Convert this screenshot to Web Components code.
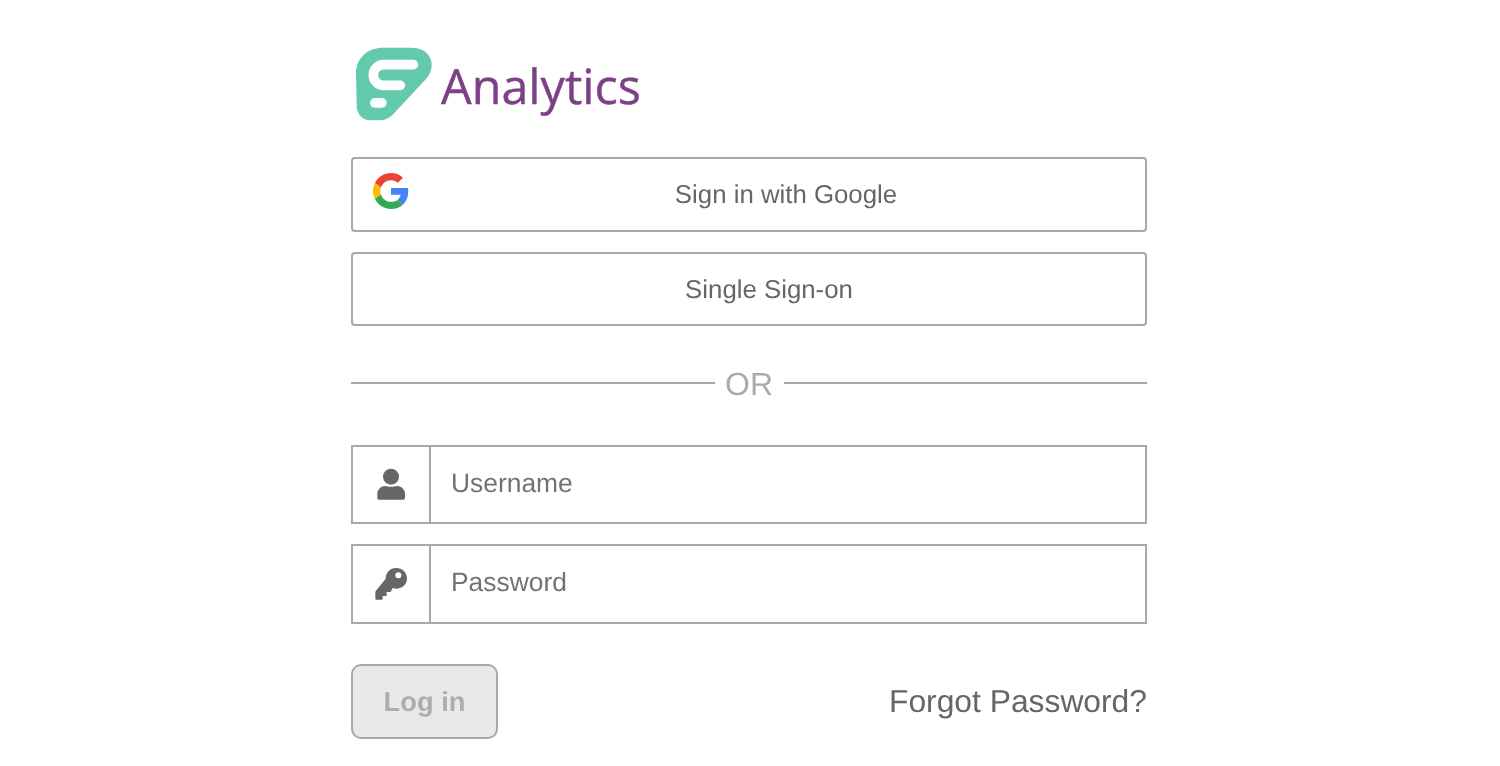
<!DOCTYPE html>
<html>
<head>
<meta charset="utf-8">
<title>Analytics</title>
<style>
    html, body { margin: 0; background: #fff; }
    body { font-family: "Liberation Sans", Arial, sans-serif; color: #666; text-rendering: geometricPrecision; }
</style>
</head>
<body>
<login-page>
    <brand-logo slot="logo">Analytics</brand-logo>
    <sign-button slot="sso" icon="google">Sign in with Google</sign-button>
    <sign-button slot="sso">Single Sign-on</sign-button>
    <or-divider slot="divider">OR</or-divider>
    <icon-field slot="fields" icon="user">Username</icon-field>
    <icon-field slot="fields" icon="key">Password</icon-field>
    <login-actions slot="actions" link="Forgot Password?">Log in</login-actions>
</login-page>

<script>
class LoginPage extends HTMLElement {
    constructor() {
        super()
        this.attachShadow({mode: 'open'})
        this.shadowRoot.innerHTML = `
            <style>
                :host { display: block; padding: 47px 0 0 351px; will-change: transform; }
                .box { width: 796px; }
                .sso { display: flex; flex-direction: column; gap: 20px; margin-top: 36px; }
                .fields { display: flex; flex-direction: column; gap: 20px; margin-top: 42px; }
                .divider { display: block; margin-top: 40.8px; }
                .actions { display: block; margin-top: 40.2px; }
            </style>
            <div class="box">
                <slot name="logo"></slot>
                <div class="sso"><slot name="sso"></slot></div>
                <div class="divider"><slot name="divider"></slot></div>
                <div class="fields"><slot name="fields"></slot></div>
                <div class="actions"><slot name="actions"></slot></div>
            </div>
        `
    }
}

class BrandLogo extends HTMLElement {
    constructor() {
        super()
        this.attachShadow({mode: 'open'})
        this.shadowRoot.innerHTML = `
            <style>
                :host { display: flex; align-items: center; height: 74px; padding-left: 3px; }
                svg { width: 80px; height: 76px; flex: none; }
                span {
                    margin-left: 7px;
                    padding-top: 4px;
                    font: 48.5px/1 "Open Sans", sans-serif;
                    color: #7c4086;
                    -webkit-text-stroke: 0.4px #7c4086;
                }
            </style>
            <svg viewBox="12 12 240 228">
                <path fill="#64caae" d="M18 95C18 48 52 17 100 17H188C224 17 247 42 245 72C244 88 238 100 228 111L133 213C119 228 106 235 88 235H62C36 235 20 216 20 190Z"/>
                <path fill="none" stroke="#fff" stroke-width="29" stroke-linecap="round" d="M190 68H101A31 31 0 0 0 101 130H151"/>
                <rect x="60" y="168" width="50" height="29" rx="14.5" fill="#fff"/>
            </svg>
            <span><slot></slot></span>
        `
    }
}

const GOOGLE_ICON = `
    <svg viewBox="0 0 48 48">
        <path fill="#EA4335" d="M24 9.5c3.54 0 6.71 1.22 9.21 3.6l6.85-6.85C35.9 2.38 30.47 0 24 0 14.62 0 6.51 5.38 2.56 13.22l7.98 6.19C12.43 13.72 17.74 9.5 24 9.5z"/>
        <path fill="#4285F4" d="M46.98 24.55c0-1.57-.15-3.09-.38-4.55H24v9.02h12.94c-.58 2.96-2.26 5.48-4.78 7.18l7.73 6c4.51-4.18 7.09-10.36 7.09-17.65z"/>
        <path fill="#FBBC05" d="M10.53 28.59c-.5-1.45-.78-2.99-.78-4.59s.27-3.14.78-4.59l-7.98-6.19C.92 16.46 0 20.12 0 24c0 3.88.92 7.54 2.56 10.78l7.97-6.19z"/>
        <path fill="#34A853" d="M24 48c6.48 0 11.93-2.13 15.89-5.81l-7.73-6c-2.15 1.45-4.92 2.3-8.16 2.3-6.26 0-11.57-4.22-13.47-9.91l-7.98 6.19C6.51 42.62 14.62 48 24 48z"/>
    </svg>`

class SignButton extends HTMLElement {
    constructor() {
        super()
        this.attachShadow({mode: 'open'})
        const hasIcon = this.getAttribute('icon') === 'google'
        this.shadowRoot.innerHTML = `
            <style>
                :host {
                    display: flex;
                    box-sizing: border-box;
                    height: 74.6px;
                    padding-left: ${hasIcon ? 20 : 40}px;
                    background: #fff;
                    border: 2px solid #a8a8a8;
                    border-radius: 4px;
                    font: 25.8px "Liberation Sans", Arial, sans-serif;
                    color: #666;
                }
                svg { width: 36px; height: 36px; flex: none; margin: 14px 18px 0 0; }
                span { flex: 1; text-align: center; line-height: 72.5px; }
            </style>
            ${hasIcon ? GOOGLE_ICON : ''}
            <span><slot></slot></span>
        `
    }
}

class OrDivider extends HTMLElement {
    constructor() {
        super()
        this.attachShadow({mode: 'open'})
        this.shadowRoot.innerHTML = `
            <style>
                :host {
                    display: flex;
                    align-items: center;
                    height: 36px;
                    font: 32px/37px "Liberation Sans", Arial, sans-serif;
                    color: #ababab;
                }
                i { flex: 1; height: 2px; background: #a8a8a8; margin-top: -3px; }
                span { padding: 0 10.5px; }
            </style>
            <i></i><span><slot></slot></span><i></i>
        `
    }
}

const FIELD_ICONS = {
    user: `<svg viewBox="0 0 126 126" style="width:42px;height:42px">
        <circle cx="63" cy="38" r="24" fill="#666"/>
        <path fill="#666" d="M22 90C22 76 33 66 46 66C54 69 72 69 81 66C94 66 105 76 105 90V102Q105 107 100 107H27Q22 107 22 102Z"/>
    </svg>`,
    key: `<svg viewBox="0 0 126 132" style="width:42px;height:44px">
        <path fill="#666" fill-rule="evenodd" d="M47 50C47 32 60 18 79 18C97 18 111 32 111 49C111 67 97 80 79 80C75 80 72 80 68 78L62 90H50V102H38V110Q38 113 35 113H19Q16 113 16 110V92Q16 88 18 86ZM76 40a9 9 0 1 0 18 0a9 9 0 1 0 -18 0Z"/>
    </svg>`
}

class IconField extends HTMLElement {
    constructor() {
        super()
        this.attachShadow({mode: 'open'})
        this.shadowRoot.innerHTML = `
            <style>
                :host {
                    display: flex;
                    box-sizing: border-box;
                    height: 79.4px;
                    background: #fff;
                    border: 2px solid #a8a8a8;
                    font: 26.4px "Liberation Sans", Arial, sans-serif;
                    color: #737373;
                }
                .icon {
                    display: flex;
                    align-items: center;
                    justify-content: center;
                    box-sizing: border-box;
                    width: 78px;
                    border-right: 2px solid #a8a8a8;
                }
                .text { flex: 1; padding-left: 20px; line-height: 73px; }
            </style>
            <div class="icon">${FIELD_ICONS[this.getAttribute('icon')]}</div>
            <div class="text"><slot></slot></div>
        `
    }
}

class LoginActions extends HTMLElement {
    constructor() {
        super()
        this.attachShadow({mode: 'open'})
        this.shadowRoot.innerHTML = `
            <style>
                :host { display: flex; align-items: center; justify-content: space-between; }
                .btn {
                    box-sizing: border-box;
                    width: 147px;
                    height: 75px;
                    background: #e9e9e9;
                    border: 2px solid #a8a8a8;
                    border-radius: 10px;
                    font: bold 27.3px/71px "Liberation Sans", Arial, sans-serif;
                    color: #adadad;
                    text-align: center;
                }
                a { font: 31.8px "Liberation Sans", Arial, sans-serif; color: #666; text-decoration: none; }
            </style>
            <div class="btn"><slot></slot></div>
            <a href="#">${this.getAttribute('link')}</a>
        `
    }
}

window.customElements.define('login-page', LoginPage)
window.customElements.define('brand-logo', BrandLogo)
window.customElements.define('sign-button', SignButton)
window.customElements.define('or-divider', OrDivider)
window.customElements.define('icon-field', IconField)
window.customElements.define('login-actions', LoginActions)
</script>
</body>
</html>
